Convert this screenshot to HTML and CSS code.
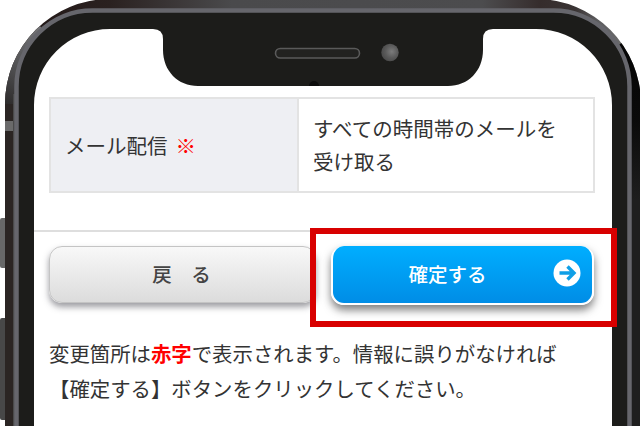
FILE: index.html
```html
<!DOCTYPE html>
<html lang="ja">
<head>
<meta charset="utf-8">
<title>確定</title>
<link rel="stylesheet" href="styles.css">
</head>
<body>
<div class="stage">
  <main class="screen">
    <table class="info">
      <tr>
        <th>メール配信<span class="mark">※</span></th>
        <td>すべての時間帯のメールを<br>受け取る</td>
      </tr>
    </table>
    <hr class="rule">
    <div class="actions">
      <button class="btn back">戻　る</button>
      <button class="btn ok">確定する
        <svg class="arrow" viewBox="0 0 28 28" width="28" height="28" aria-hidden="true">
          <circle cx="14" cy="14" r="13.5" fill="#fff"/>
          <path d="M6.5 14H20M14.5 7.5L21 14L14.5 20.5" fill="none" stroke="#0f9fe6" stroke-width="3.4"/>
        </svg>
      </button>
    </div>
    <p class="note">変更箇所は<strong>赤字</strong>で表示されます。情報に誤りがなければ<br>【確定する】ボタンをクリックしてください。</p>
  </main>
  <svg class="frame" viewBox="0 0 640 427" width="640" height="427" aria-hidden="true">
    <defs>
      <clipPath id="outer">
        <path clip-rule="evenodd" d="M5 426V104A105 105 0 0 1 110 -1H536A105 105 0 0 1 641 104V426ZM16.500 426V86.500A76 76 0 0 1 92.500 10.500H553.500A76 76 0 0 1 629.500 86.500V426Z"/>
      </clipPath>
      <linearGradient id="arcLeft" gradientUnits="userSpaceOnUse" x1="5" y1="104" x2="42" y2="26">
        <stop offset="0" stop-color="#2d2b2b"/>
        <stop offset="0.5" stop-color="#555557"/>
        <stop offset="1" stop-color="#777779"/>
      </linearGradient>
      <linearGradient id="topBand" gradientUnits="userSpaceOnUse" x1="40" y1="0" x2="622" y2="0">
        <stop offset="0" stop-color="#241a19"/>
        <stop offset="0.12" stop-color="#2a2120"/>
        <stop offset="0.33" stop-color="#4a4a4c"/>
        <stop offset="0.76" stop-color="#4c4c4e"/>
        <stop offset="0.86" stop-color="#352c2c"/>
        <stop offset="0.92" stop-color="#3a3434"/>
        <stop offset="0.96" stop-color="#5e5e60"/>
        <stop offset="1" stop-color="#6a6a6a"/>
      </linearGradient>
      <linearGradient id="rightBand" gradientUnits="userSpaceOnUse" x1="0" y1="40" x2="0" y2="200">
        <stop offset="0" stop-color="#050505"/>
        <stop offset="0.5" stop-color="#0a0a0a"/>
        <stop offset="1" stop-color="#1e1e1e"/>
      </linearGradient>
      <radialGradient id="lens" cx="0.6" cy="0.45" r="0.6">
        <stop offset="0" stop-color="#7c7c7c"/>
        <stop offset="0.6" stop-color="#5a5a5a"/>
        <stop offset="1" stop-color="#4a4a4a"/>
      </radialGradient>
    </defs>
    <rect x="0" y="218" width="8" height="50" rx="2" fill="#686868"/>
    <rect x="0" y="318" width="8" height="102" rx="2" fill="#484848"/>
    <g clip-path="url(#outer)">
      <rect x="0" y="-2" width="641" height="120" fill="url(#topBand)"/>
      <polygon points="-5,104 110,104 30,15 -5,15" fill="url(#arcLeft)"/>
      <polygon points="536,104 650,22.600 650,430 536,430" fill="url(#rightBand)"/>
      <rect x="0" y="104" width="13" height="323" fill="#2b2523"/>
      <rect x="13" y="94" width="3" height="333" fill="#4a4a4a"/>
      <rect x="5" y="121" width="8" height="10" fill="#6a6a6a"/>
    </g>
    <path fill="#1c1c1a" d="M16.500 426V86.500A76 76 0 0 1 92.500 10.500H553.500A76 76 0 0 1 629.500 86.500V426H612V105A76 76 0 0 0 536 29H493Q483 29 483 39V50C483 71 468 86 448 86H198C178 86 163 71 163 50V39Q163 29 153 29H110A76 76 0 0 0 34 105V426Z"/>
    <path d="M16.500 426V86.500A76 76 0 0 1 92.500 10.500H553.500A76 76 0 0 1 629.500 86.500V426" fill="none" stroke="#66666c" stroke-width="4.500"/>
    <rect x="275.500" y="48.500" width="84" height="9.500" rx="4.750" fill="#222220" stroke="#5a5a5a" stroke-width="1.600"/>
    <circle cx="390" cy="52.500" r="8.700" fill="url(#lens)"/>
    <path d="M309 86A5 5 0 0 1 319 86Z" fill="#0c0c0c"/>
  </svg>
  <div class="callout"></div>
</div>
</body>
</html>
```
FILE: styles.css
```css
html, body {
  margin: 0;
  padding: 0;
  background: #fff;
}

.stage {
  position: relative;
  width: 640px;
  height: 427px;
  overflow: hidden;
  background: #fff;
  font-family: "Noto Sans CJK JP", "Noto Sans", sans-serif;
  color: #333;
}

.screen {
  width: 578px;
  margin-left: 34px;
  padding: 97px 17px 0 15px;
  box-sizing: border-box;
}

.info {
  width: 546px;
  height: 96px;
  table-layout: fixed;
  border-collapse: collapse;
  font-size: 20.500px;
  line-height: 33px;
}

.info th,
.info td {
  border: 2px solid #e3e3e3;
  font-weight: 400;
  text-align: left;
  vertical-align: middle;
}

.info th {
  width: 218px;
  padding: 0 14px;
  background: #eeeff3;
}

.info td {
  padding: 0 14px;
}

.mark {
  margin-left: 8px;
  color: #f00;
}

.rule {
  height: 2px;
  margin: 37px -17px 0 -15px;
  border: 0;
  background: #dedede;
}

.actions {
  display: grid;
  grid-template-columns: 267px 263px;
  column-gap: 15px;
  align-items: start;
  margin-top: 14px;
}

.btn {
  position: relative;
  display: block;
  margin: 0;
  padding: 0;
  font-family: inherit;
  font-size: 19.500px;
  font-weight: 500;
  text-align: center;
  cursor: pointer;
}

.back {
  height: 57px;
  border: 1px solid #c4c4c4;
  border-radius: 13px;
  background: linear-gradient(#f8f8f8, #dcdcdc);
  box-shadow: 0 4px 6px rgba(60, 60, 70, 0.5);
  color: #444;
  padding-right: 2px;
  padding-bottom: 3px;
}

.ok {
  height: 59px;
  border: 2px solid #fff;
  border-top-width: 0;
  border-radius: 13px;
  background: linear-gradient(#00aeff, #008de6);
  box-shadow: 0 5px 8px rgba(40, 40, 40, 0.6);
  color: #fff;
  padding-right: 30px;
  padding-bottom: 3px;
}

.arrow {
  position: absolute;
  top: 13px;
  right: 11px;
}

.note {
  margin: 31px 0 0;
  font-size: 20.400px;
  line-height: 35px;
  white-space: nowrap;
}

.note strong {
  font-weight: 700;
  color: #f00;
}

.callout {
  position: absolute;
  left: 310px;
  top: 228px;
  width: 307px;
  height: 99px;
  box-sizing: border-box;
  border: 6px solid #d80000;
}

.frame {
  position: absolute;
  left: 0;
  top: 0;
  pointer-events: none;
}
```
